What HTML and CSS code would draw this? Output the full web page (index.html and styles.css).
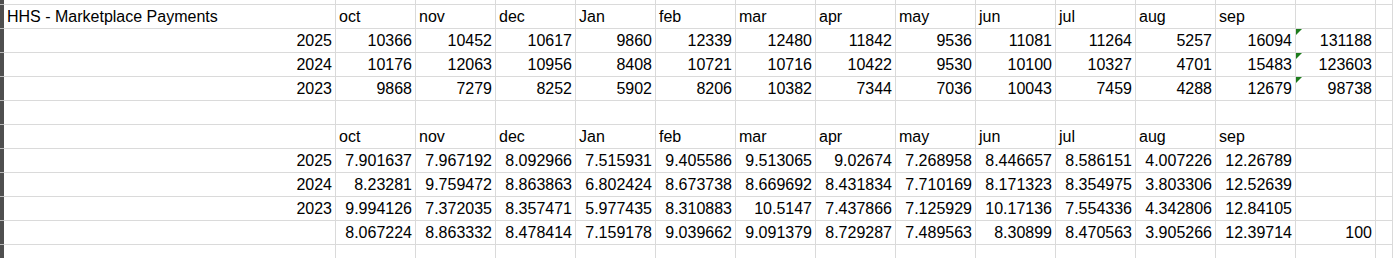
FILE: index.html
```html
<!DOCTYPE html>
<html lang="en">
<head>
<meta charset="utf-8">
<title>HHS - Marketplace Payments</title>
<link rel="stylesheet" href="styles.css">
</head>
<body>
<div class="sheet">
  <div class="row top"><div class="bar"></div><div class="c"></div><div class="c"></div><div class="c"></div><div class="c"></div><div class="c"></div><div class="c"></div><div class="c"></div><div class="c"></div><div class="c"></div><div class="c"></div><div class="c"></div><div class="c"></div><div class="c"></div><div class="c"></div><div class="c"></div></div>

  <div class="row"><div class="bar"></div><div class="c">HHS - Marketplace Payments</div><div class="c">oct</div><div class="c">nov</div><div class="c">dec</div><div class="c">Jan</div><div class="c">feb</div><div class="c">mar</div><div class="c">apr</div><div class="c">may</div><div class="c">jun</div><div class="c">jul</div><div class="c">aug</div><div class="c">sep</div><div class="c"></div><div class="c"></div></div>

  <div class="row"><div class="bar"></div><div class="c n">2025</div><div class="c n">10366</div><div class="c n">10452</div><div class="c n">10617</div><div class="c n">9860</div><div class="c n">12339</div><div class="c n">12480</div><div class="c n">11842</div><div class="c n">9536</div><div class="c n">11081</div><div class="c n">11264</div><div class="c n">5257</div><div class="c n">16094</div><div class="c n flag">131188</div><div class="c"></div></div>

  <div class="row"><div class="bar"></div><div class="c n">2024</div><div class="c n">10176</div><div class="c n">12063</div><div class="c n">10956</div><div class="c n">8408</div><div class="c n">10721</div><div class="c n">10716</div><div class="c n">10422</div><div class="c n">9530</div><div class="c n">10100</div><div class="c n">10327</div><div class="c n">4701</div><div class="c n">15483</div><div class="c n flag">123603</div><div class="c"></div></div>

  <div class="row"><div class="bar"></div><div class="c n">2023</div><div class="c n">9868</div><div class="c n">7279</div><div class="c n">8252</div><div class="c n">5902</div><div class="c n">8206</div><div class="c n">10382</div><div class="c n">7344</div><div class="c n">7036</div><div class="c n">10043</div><div class="c n">7459</div><div class="c n">4288</div><div class="c n">12679</div><div class="c n flag">98738</div><div class="c"></div></div>

  <div class="row"><div class="bar"></div><div class="c"></div><div class="c"></div><div class="c"></div><div class="c"></div><div class="c"></div><div class="c"></div><div class="c"></div><div class="c"></div><div class="c"></div><div class="c"></div><div class="c"></div><div class="c"></div><div class="c"></div><div class="c"></div><div class="c"></div></div>

  <div class="row"><div class="bar"></div><div class="c"></div><div class="c">oct</div><div class="c">nov</div><div class="c">dec</div><div class="c">Jan</div><div class="c">feb</div><div class="c">mar</div><div class="c">apr</div><div class="c">may</div><div class="c">jun</div><div class="c">jul</div><div class="c">aug</div><div class="c">sep</div><div class="c"></div><div class="c"></div></div>

  <div class="row"><div class="bar"></div><div class="c n">2025</div><div class="c n">7.901637</div><div class="c n">7.967192</div><div class="c n">8.092966</div><div class="c n">7.515931</div><div class="c n">9.405586</div><div class="c n">9.513065</div><div class="c n">9.02674</div><div class="c n">7.268958</div><div class="c n">8.446657</div><div class="c n">8.586151</div><div class="c n">4.007226</div><div class="c n">12.26789</div><div class="c"></div><div class="c"></div></div>

  <div class="row"><div class="bar"></div><div class="c n">2024</div><div class="c n">8.23281</div><div class="c n">9.759472</div><div class="c n">8.863863</div><div class="c n">6.802424</div><div class="c n">8.673738</div><div class="c n">8.669692</div><div class="c n">8.431834</div><div class="c n">7.710169</div><div class="c n">8.171323</div><div class="c n">8.354975</div><div class="c n">3.803306</div><div class="c n">12.52639</div><div class="c"></div><div class="c"></div></div>

  <div class="row"><div class="bar"></div><div class="c n">2023</div><div class="c n">9.994126</div><div class="c n">7.372035</div><div class="c n">8.357471</div><div class="c n">5.977435</div><div class="c n">8.310883</div><div class="c n">10.5147</div><div class="c n">7.437866</div><div class="c n">7.125929</div><div class="c n">10.17136</div><div class="c n">7.554336</div><div class="c n">4.342806</div><div class="c n">12.84105</div><div class="c"></div><div class="c"></div></div>

  <div class="row"><div class="bar"></div><div class="c"></div><div class="c n">8.067224</div><div class="c n">8.863332</div><div class="c n">8.478414</div><div class="c n">7.159178</div><div class="c n">9.039662</div><div class="c n">9.091379</div><div class="c n">8.729287</div><div class="c n">7.489563</div><div class="c n">8.30899</div><div class="c n">8.470563</div><div class="c n">3.905266</div><div class="c n">12.39714</div><div class="c n">100</div><div class="c"></div></div>

  <div class="row"><div class="bar"></div><div class="c"></div><div class="c"></div><div class="c"></div><div class="c"></div><div class="c"></div><div class="c"></div><div class="c"></div><div class="c"></div><div class="c"></div><div class="c"></div><div class="c"></div><div class="c"></div><div class="c"></div><div class="c"></div><div class="c"></div></div>

  <div class="row"><div class="bar"></div><div class="c"></div><div class="c"></div><div class="c"></div><div class="c"></div><div class="c"></div><div class="c"></div><div class="c"></div><div class="c"></div><div class="c"></div><div class="c"></div><div class="c"></div><div class="c"></div><div class="c"></div><div class="c"></div><div class="c"></div></div>
</div>
</body>
</html>
```
FILE: styles.css
```css
html, body {
  margin: 0;
  padding: 0;
  background: #ffffff;
  overflow: hidden;
}

.sheet {
  font-family: "Liberation Sans", Arial, sans-serif;
  font-size: 16px;
  color: #000000;
  width: 1393px;
  height: 258px;
  overflow: hidden;
}

.row {
  display: grid;
  grid-template-columns: 4px 332px repeat(13, 80px) 1fr;
  height: 24px;
}

.row.top {
  height: 5px;
}

.bar {
  background: #4f4f4f;
  border-bottom: 1px solid #b8b8b8;
}

.c {
  position: relative;
  border-right: 1px solid #dadada;
  border-bottom: 1px solid #dadada;
  padding: 0 3px;
  line-height: 23px;
  white-space: nowrap;
  overflow: hidden;
}

.c.n {
  text-align: right;
}

.flag::before {
  content: "";
  position: absolute;
  top: 0;
  left: 0;
  width: 0;
  height: 0;
  border-top: 6px solid #1c7c1c;
  border-right: 6px solid transparent;
}
```
